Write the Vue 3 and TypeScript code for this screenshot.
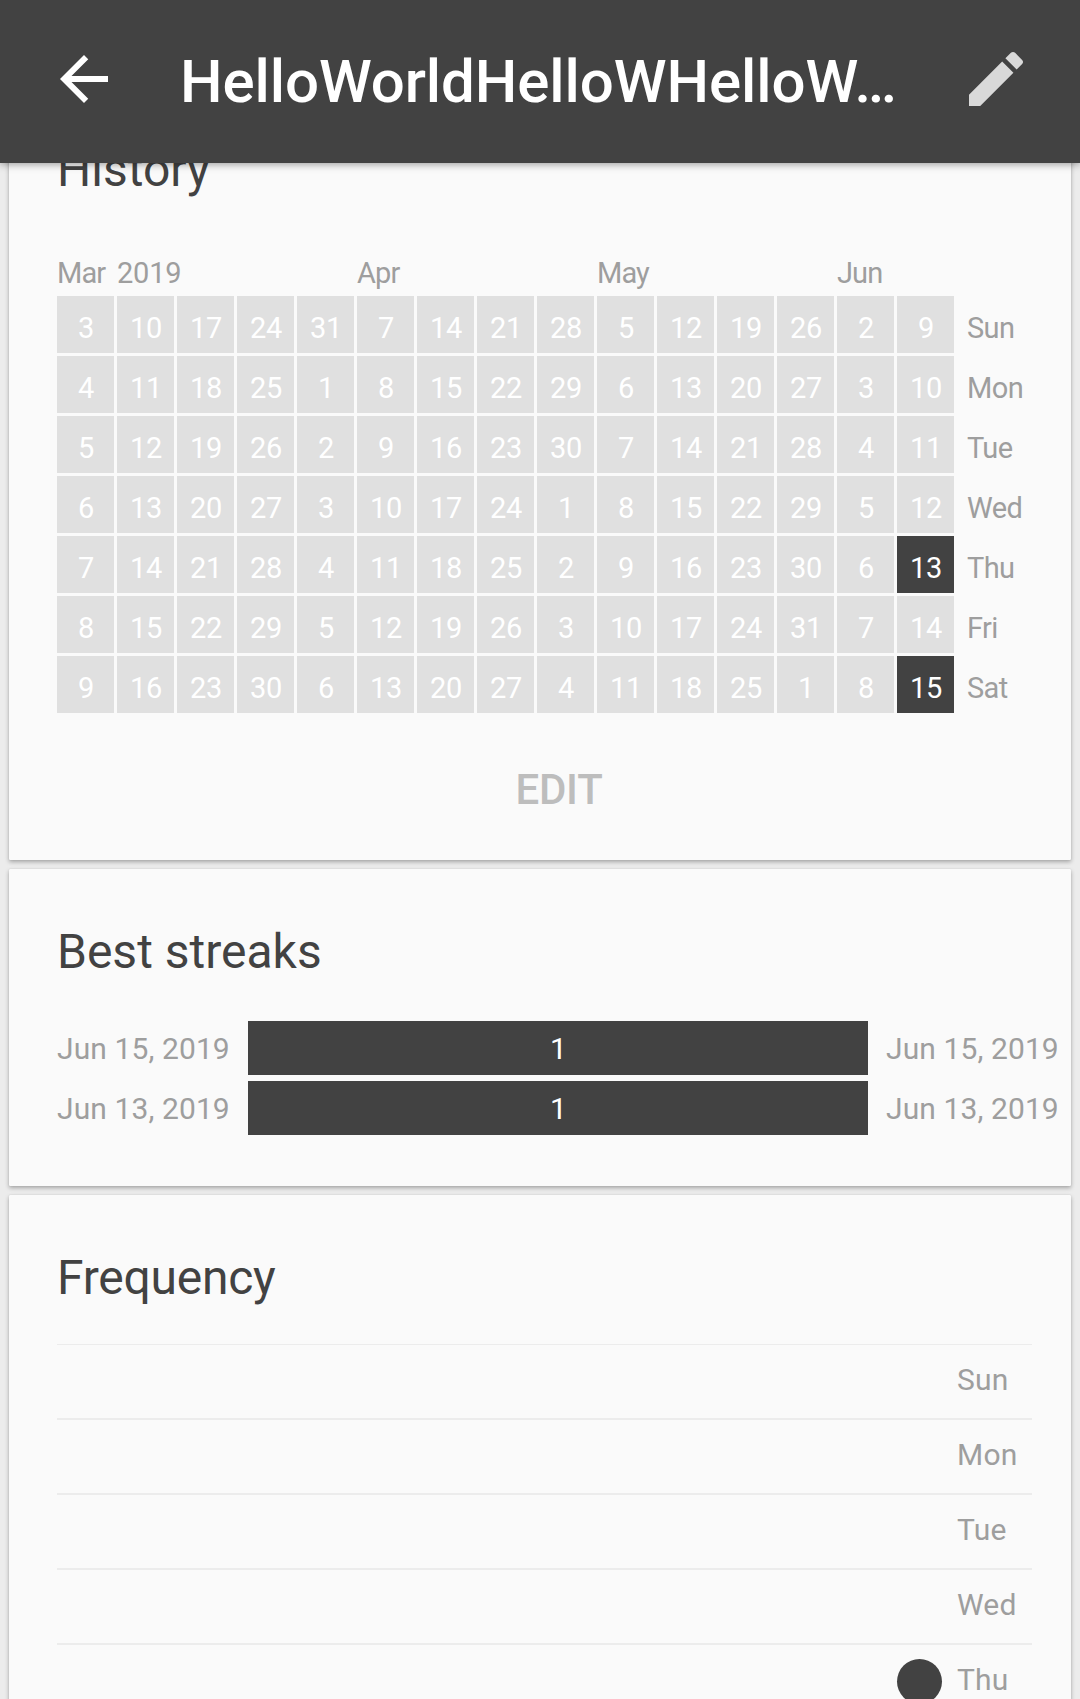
<script setup lang="ts">
interface Streak {
  start: string
  end: string
  length: number
}

const title = 'HelloWorldHelloWHelloW…'
const weekdays = ['Sun', 'Mon', 'Tue', 'Wed', 'Thu', 'Fri', 'Sat']
const columnCount = 15
const firstSunday = Date.UTC(2019, 2, 3)
const dayMs = 86400000
const checked = new Set(['5-13', '5-15'])

const rows = weekdays.map((name, row) => ({
  name,
  days: Array.from({ length: columnCount }, (_, col) => {
    const date = new Date(firstSunday + (col * 7 + row) * dayMs)
    const key = `${date.getUTCMonth()}-${date.getUTCDate()}`
    return { key, day: date.getUTCDate(), checked: checked.has(key) }
  }),
}))

// One header slot per week column; most of them stay empty.
const headings: Record<number, string> = { 0: 'Mar', 1: '2019', 5: 'Apr', 9: 'May', 13: 'Jun' }
const months = Array.from({ length: columnCount }, (_, col) => headings[col] ?? '')

const streaks: Streak[] = [
  { start: 'Jun 15, 2019', end: 'Jun 15, 2019', length: 1 },
  { start: 'Jun 13, 2019', end: 'Jun 13, 2019', length: 1 },
]

const frequency = weekdays.slice(0, 5).map((name) => ({ name, marked: name === 'Thu' }))
</script>

<template>
  <div class="screen">
    <header class="toolbar">
      <svg class="icon back" viewBox="0 0 24 24">
        <path d="M20 11H7.83l5.59-5.59L12 4l-8 8 8 8 1.41-1.41L7.83 13H20v-2z" />
      </svg>
      <h1 class="title">{{ title }}</h1>
      <svg class="icon edit-icon" viewBox="0 0 24 24">
        <path d="M3 17.25V21h3.75L17.81 9.94l-3.75-3.75L3 17.25zM20.71 7.04c.39-.39.39-1.02 0-1.41l-2.34-2.34c-.39-.39-1.02-.39-1.41 0l-1.83 1.83 3.75 3.75 1.83-1.83z" />
      </svg>
    </header>

    <main class="content">
      <section class="card history">
        <h2 class="heading">History</h2>
        <div class="calendar">
          <div class="months">
            <span v-for="(month, i) in months" :key="i" class="month" :class="{ year: month === '2019' }">{{ month }}</span>
          </div>
          <div v-for="row in rows" :key="row.name" class="week-row">
            <span v-for="d in row.days" :key="d.key" class="day" :class="{ checked: d.checked }">{{ d.day }}</span>
            <span class="weekday">{{ row.name }}</span>
          </div>
        </div>
        <button class="edit-button" type="button">EDIT</button>
      </section>

      <section class="card streaks">
        <h2 class="heading">Best streaks</h2>
        <div class="streak-list">
          <div v-for="s in streaks" :key="s.start" class="streak">
            <span class="date">{{ s.start }}</span>
            <span class="bar">{{ s.length }}</span>
            <span class="date">{{ s.end }}</span>
          </div>
        </div>
      </section>

      <section class="card frequency">
        <h2 class="heading">Frequency</h2>
        <div class="chart">
          <div v-for="f in frequency" :key="f.name" class="freq-row">
            <span class="plot"><span v-if="f.marked" class="dot"></span></span>
            <span class="freq-label">{{ f.name }}</span>
          </div>
        </div>
      </section>
    </main>
  </div>
</template>

<style>
body {
  margin: 0;
  background: #ececec;
}
</style>

<style scoped>
.screen {
  display: flex;
  flex-direction: column;
  width: 1080px;
  height: 1699px;
  overflow: hidden;
  background: #ececec;
  font-family: Roboto, 'Liberation Sans', sans-serif;
  color: #9e9e9e;
}
.toolbar {
  position: relative;
  z-index: 1;
  display: flex;
  flex: none;
  box-sizing: border-box;
  height: 163px;
  padding: 43px 48px 0;
  background: #424242;
  box-shadow: 0 1px 8px rgba(0, 0, 0, 0.42);
}
.icon {
  flex: none;
  width: 72px;
  height: 72px;
  fill: #fff;
}
.edit-icon {
  fill: #d9d9d9;
}
.title {
  flex: 1;
  margin: 0 0 0 60px;
  font-size: 60px;
  line-height: 78px;
  font-weight: 500;
  letter-spacing: -0.08px;
  color: #fff;
  white-space: nowrap;
}
.content {
  display: flex;
  flex: none;
  flex-direction: column;
  gap: 9px;
  padding: 0 9px;
  margin-top: -57px;
}
.card {
  box-sizing: border-box;
  padding: 55px 48px 0;
  border-radius: 1px;
  background: #fafafa;
  box-shadow: 0 2px 4px rgba(0, 0, 0, 0.3), 0 0 1px rgba(0, 0, 0, 0.18);
}
.heading {
  margin: 0;
  font-size: 48px;
  line-height: 56px;
  font-weight: 400;
  color: #424242;
}
.history {
  height: 754px;
  padding-top: 36px;
}
.calendar {
  margin-top: 52px;
  font-size: 29px;
  letter-spacing: -0.2px;
}
.months {
  display: flex;
  height: 46px;
}
.month {
  width: 60px;
  line-height: 46px;
  letter-spacing: -0.9px;
}
.month.year {
  letter-spacing: -0.2px;
}
.week-row {
  display: flex;
  gap: 3px;
  height: 57px;
  margin-bottom: 3px;
  line-height: 64px;
}
.day {
  flex: none;
  box-sizing: border-box;
  width: 57px;
  padding-left: 1px;
  background: #e0e0e0;
  color: #fff;
  text-align: center;
}
.day.checked {
  background: #424242;
}
.weekday {
  margin-left: 10px;
  letter-spacing: -0.6px;
}
.edit-button {
  display: block;
  width: 1004px;
  height: 96px;
  margin-top: 29px;
  padding: 0;
  border: 0;
  background: none;
  font: 500 42px/96px Roboto, 'Liberation Sans', sans-serif;
  letter-spacing: -0.2px;
  color: #bdbdbd;
}
.streaks {
  height: 317px;
}
.streak-list {
  display: flex;
  flex-direction: column;
  gap: 6px;
  margin-top: 41px;
  font-size: 30px;
  line-height: 56px;
}
.streak {
  display: flex;
  height: 54px;
  white-space: nowrap;
}
.date {
  flex: none;
  width: 173px;
  letter-spacing: 0.1px;
}
.bar {
  flex: none;
  box-sizing: border-box;
  width: 620px;
  margin: 0 18px;
  padding-left: 1px;
  background: #424242;
  color: #fff;
  text-align: center;
}
.frequency {
  height: 600px;
}
.frequency .heading {
  letter-spacing: -0.25px;
}
.chart {
  width: 975px;
  margin-top: 38px;
  font-size: 30px;
  letter-spacing: 0.2px;
}
.freq-row {
  display: flex;
  box-sizing: border-box;
  height: 75px;
  border-top: 2px solid #ececec;
  line-height: 70px;
}
.freq-row:first-child {
  height: 74px;
  border-top-width: 1px;
}
.plot {
  display: flex;
  justify-content: flex-end;
  align-items: center;
  width: 885px;
}
.dot {
  width: 45px;
  height: 45px;
  border-radius: 50%;
  background: #424242;
}
.freq-label {
  margin-left: 15px;
}
</style>
